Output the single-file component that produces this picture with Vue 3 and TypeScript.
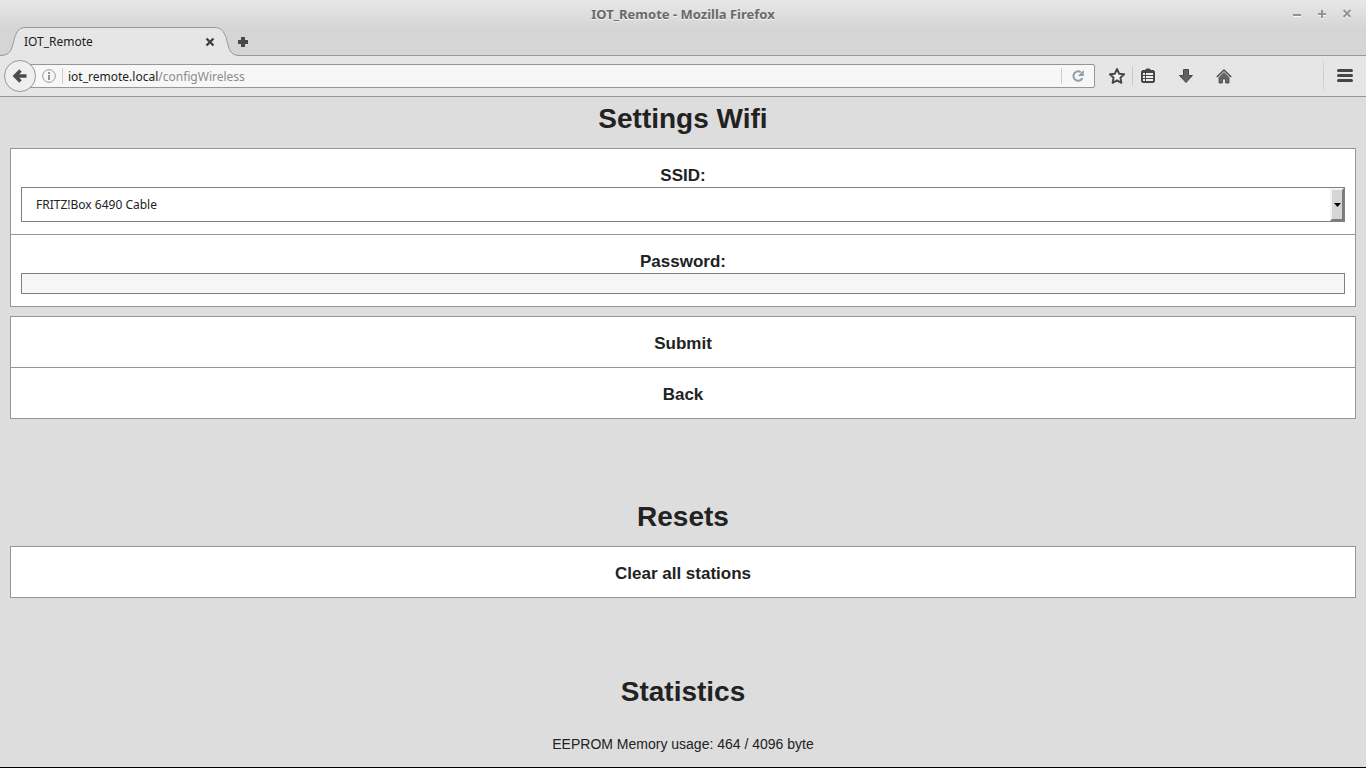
<script setup lang="ts">
import { ref } from 'vue'

const networks: string[] = ['FRITZ!Box 6490 Cable']
const ssid = ref<string>(networks[0])
const password = ref<string>('')
const usedBytes = 464
const totalBytes = 4096
</script>

<template>
  <div class="window">
    <header class="chrome">
      <div class="titlebar">
        <span class="title">IOT_Remote - Mozilla Firefox</span>
        <div class="controls">
          <button type="button" aria-label="Minimize">
            <svg width="11" height="12" viewBox="0 0 11 12"><path d="M1 8h8" class="hl" /><path d="M1 7h8" class="wm" /></svg>
          </button>
          <button type="button" aria-label="Maximize">
            <svg width="11" height="12" viewBox="0 0 11 12"><path d="M1 7h8M5 3v8" class="hl" /><path d="M1 6h8M5 2v8" class="wm" /></svg>
          </button>
          <button type="button" aria-label="Close window">
            <svg width="11" height="12" viewBox="0 0 11 12"><path d="M1.500 3l7 7M8.500 3l-7 7" class="hl" /><path d="M1.500 2l7 7M8.500 2l-7 7" class="wm" /></svg>
          </button>
        </div>
      </div>

      <nav class="tabs" aria-label="Tabs">
        <div class="tab">
          <svg class="tab-shape" width="240" height="29" viewBox="0 0 240 29" aria-hidden="true">
            <path d="M0 29V28.500C12 28.500 12 20 14.500 11C17 3 20 .5 26 .5H214C221 .5 224 4 226.500 12C229 21 229 28.500 240 28.500V29Z" fill="#e6e6e6" />
            <path d="M0 28.500C12 28.500 12 20 14.500 11C17 3 20 .5 26 .5H214C221 .5 224 4 226.500 12C229 21 229 28.500 240 28.500" fill="none" stroke="#96999c" />
          </svg>
          <span class="tab-label">IOT_Remote</span>
          <button type="button" aria-label="Close tab">
            <svg width="10" height="10" viewBox="0 0 10 10"><path d="M1.500 1.500l7 7M8.500 1.500l-7 7" stroke="#3e3e3e" stroke-width="2.300" /></svg>
          </button>
        </div>
        <button type="button" class="new-tab" aria-label="New tab">
          <svg width="12" height="12" viewBox="0 0 12 12"><path d="M4 1h4v3h3v4H8v3H4V8H1V4h3z" fill="#484848" /></svg>
        </button>
      </nav>

      <div class="toolbar">
        <button type="button" class="back" aria-label="Back">
          <svg width="16" height="16" viewBox="0 0 16 16"><path d="M8.500 2.500L3 8l5.500 5.500M3.500 8H14.500" fill="none" stroke="#4b4b4b" stroke-width="3.400" /></svg>
        </button>
        <div class="urlbar">
          <button type="button" class="identity" aria-label="Site information">
            <svg width="14" height="14" viewBox="0 0 14 14"><circle cx="7" cy="7" r="6.300" fill="none" stroke="#999" /><path d="M7 3v2M7 6v5" stroke="#8a8a8a" stroke-width="1.800" /></svg>
          </button>
          <a class="url" href="#">iot_remote.local<span>/configWireless</span></a>
          <button type="button" class="reload" aria-label="Reload">
            <svg width="14" height="14" viewBox="0 0 14 14"><path d="M11.400 9A4.700 4.700 0 1 1 9.800 3.200" fill="none" stroke="#929eac" stroke-width="2" /><path d="M12.800 1v6h-6z" fill="#929eac" /></svg>
          </button>
        </div>
        <button type="button" class="tool star" aria-label="Bookmark this page">
          <svg width="18" height="18" viewBox="0 0 18 18"><path d="M9 2l2.100 4.700 5 .6-3.700 3.500 1 5L9 13.300l-4.400 2.500 1-5L1.900 7.300l5-.6z" fill="#f0f0f0" stroke="#474747" stroke-width="1.900" stroke-linejoin="round" /></svg>
        </button>
        <i class="divider short"></i>
        <button type="button" class="tool list" aria-label="Show bookmarks">
          <svg width="16" height="16" viewBox="0 0 16 16">
            <path d="M2.500 2H5l1.500-1.500h3L11 2h2.500L15 3.500v10L13.500 15h-11L1 13.500v-10z" fill="#474747" />
            <path d="M3 5h2v2H3zM6 5h7v2H6zM3 8h2v2H3zM6 8h7v2H6zM3 11h2v2H3zM6 11h7v2H6z" fill="#efefef" />
          </svg>
        </button>
        <button type="button" class="tool download" aria-label="Downloads">
          <svg width="16" height="16" viewBox="0 0 16 16"><path d="M5.500 1.500h5v6H14.500L8 14.500 1.500 7.500h4z" fill="#616161" stroke="#474747" stroke-linejoin="round" /></svg>
        </button>
        <button type="button" class="tool" aria-label="Home">
          <svg width="16" height="16" viewBox="0 0 16 16"><path d="M3 9.500l5-5 5 5V15H9.500v-4h-3v4H3z" fill="#666" stroke="#474747" stroke-width=".8" /><path d="M.8 9L8 2l7.200 7" fill="none" stroke="#4b4b4b" stroke-width="1.500" /></svg>
        </button>
        <i class="divider tall"></i>
        <button type="button" class="menu" aria-label="Open menu">
          <svg width="16" height="16" viewBox="0 0 16 16"><path d="M1.500 2.500h13M1.500 7.500h13M1.500 12.500h13" stroke="#454545" stroke-width="3" stroke-linecap="round" /></svg>
        </button>
      </div>
    </header>

    <main class="page">
      <h1>Settings Wifi</h1>
      <form @submit.prevent>
        <div class="card">
          <div class="field">
            <label for="ssid">SSID:</label>
            <div class="select-box">
              <select id="ssid" v-model="ssid">
                <option v-for="name in networks" :key="name" :value="name">{{ name }}</option>
              </select>
              <span class="arrow" aria-hidden="true">
                <svg width="7" height="4" viewBox="0 0 7 4"><path d="M0 0h7L3.500 4z" /></svg>
              </span>
            </div>
          </div>
          <div class="field">
            <label for="password">Password:</label>
            <input id="password" v-model="password" type="password" />
          </div>
        </div>
        <div class="card">
          <button type="submit" class="action">Submit</button>
          <button type="button" class="action">Back</button>
        </div>
      </form>

      <h1 class="resets">Resets</h1>
      <div class="card">
        <button type="button" class="action">Clear all stations</button>
      </div>

      <h1 class="statistics">Statistics</h1>
      <p>EEPROM Memory usage: {{ usedBytes }} / {{ totalBytes }} byte</p>
    </main>
  </div>
</template>

<style>
body {
  margin: 0;
  background: #ddd;
}
</style>

<style scoped>
* {
  box-sizing: border-box;
}
.window {
  display: flex;
  flex-direction: column;
  min-height: 100vh;
  border-bottom: 1px solid #000;
  color: #222;
}
button {
  margin: 0;
  padding: 0;
  border: 0;
  background: none;
  font: inherit;
  color: inherit;
}
svg {
  display: block;
}
.chrome {
  font-family: "Noto Sans", sans-serif;
  font-size: 12px;
  background: linear-gradient(#e8e8e8, #d5d5d5 28px);
}
.titlebar {
  display: grid;
  grid-template-columns: 1fr auto 1fr;
  align-items: center;
  height: 27px;
}
.title {
  grid-column: 2;
  padding-top: 1px;
  font-size: 13px;
  line-height: 18px;
  font-weight: bold;
  color: #696969;
  text-shadow: 0 1px #f4f4f4;
}
.controls {
  display: flex;
  justify-content: flex-end;
  gap: 14px;
  padding-right: 13px;
}
.wm {
  stroke: #949494;
  stroke-width: 2;
}
.hl {
  stroke: #fafafa;
  stroke-width: 2;
}
.tabs {
  display: flex;
  height: 29px;
  box-shadow: inset 0 -1px #96999c;
}
.tab {
  position: relative;
  display: flex;
  align-items: center;
  justify-content: space-between;
  width: 240px;
  padding: 0 25px 0 24px;
}
.tab-shape {
  position: absolute;
  top: 0;
  left: 0;
}
.tab-label,
.tab button {
  position: relative;
}
.new-tab {
  padding: 0 5px;
  margin-left: -8px;
}
.toolbar {
  display: flex;
  align-items: center;
  height: 41px;
  padding-left: 4px;
  background: #e6e6e6;
  border-bottom: 1px solid #969696;
}
.back {
  z-index: 1;
  display: grid;
  place-items: center;
  width: 32px;
  height: 32px;
  border: 1px solid #999;
  border-radius: 50%;
  background: #efefef;
}
.urlbar {
  flex: 1;
  display: flex;
  align-items: center;
  height: 24px;
  margin-left: -8px;
  padding-left: 13px;
  border: 1px solid #969696;
  border-radius: 0 2px 2px 0;
  background: #f7f7f7;
}
.identity {
  height: 16px;
  padding-right: 6px;
  border-right: 1px solid #ccc;
}
.url {
  flex: 1;
  padding-left: 5px;
  color: #222;
  text-decoration: none;
}
.url span {
  color: #8c8c8c;
}
.reload {
  height: 16px;
  padding: 0 9px;
  border-left: 1px solid #ccc;
}
.tool,
.menu {
  display: grid;
  place-items: center;
  width: 38px;
  height: 32px;
}
.tool.star {
  width: 30px;
  margin-left: 7px;
}
.tool.list {
  width: 30px;
}
.tool.download {
  margin-left: 4px;
}
.menu {
  width: 42px;
}
.divider {
  width: 1px;
  background: #c8c8c8;
}
.divider.short {
  height: 18px;
}
.divider.tall {
  height: 34px;
  margin-left: 80px;
  background: linear-gradient(#ddd, #c8c8c8, #ddd);
}
.page {
  flex: 1;
  padding: 2px 10px 12px;
  background: #ddd;
  font-family: "Liberation Sans", Arial, sans-serif;
  text-align: center;
}
h1 {
  margin: 0 0 9px;
  font-size: 28px;
  line-height: 40px;
}
.resets {
  margin-top: 78px;
}
.statistics {
  margin-top: 74px;
  margin-bottom: 22px;
}
.card {
  border: 1px solid #969696;
  background: #fff;
}
.card + .card {
  margin-top: 9px;
}
.field {
  display: flex;
  flex-direction: column;
  gap: 1px;
  padding: 17px 10px 12px;
}
.card > * + * {
  border-top: 1px solid #969696;
}
label,
.action {
  font-size: 17px;
  line-height: 20px;
  font-weight: bold;
}
.select-box {
  display: grid;
  grid-template-columns: 1fr 14px;
  height: 35px;
  border: 1px solid #7f7f7f;
}
select {
  grid-area: 1 / 1 / 2 / 3;
  appearance: none;
  border: 0;
  padding: 0 14px;
  background: #fff;
  color: #222;
  font-family: "Noto Sans", sans-serif;
  font-size: 12px;
}
.arrow {
  grid-area: 1 / 2;
  display: grid;
  place-items: center;
  border: 2px solid;
  border-color: #f3f3f3 #7b7b7b #7b7b7b #f3f3f3;
  background: #d5d5d5;
  pointer-events: none;
}
input {
  width: 100%;
  height: 21px;
  padding: 0 4px;
  border: 1px solid #7f7f7f;
  border-radius: 0;
  background: #f6f6f6;
}
.action {
  display: block;
  width: 100%;
  padding: 17px 0 13px;
}
p {
  margin: 0;
  font-size: 14px;
  line-height: 20px;
}
</style>
